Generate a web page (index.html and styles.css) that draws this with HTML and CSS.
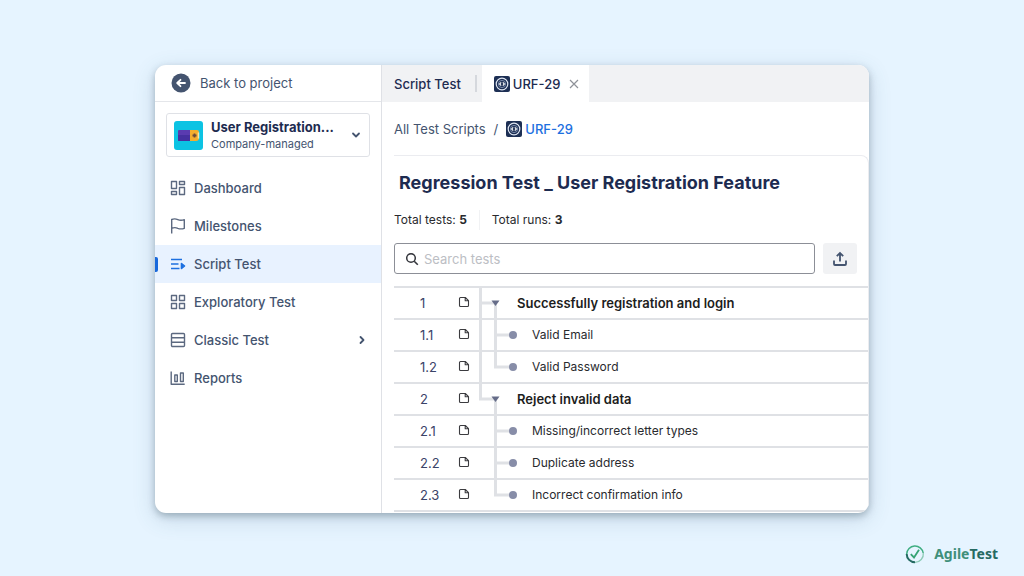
FILE: index.html
```html
<!DOCTYPE html>
<html lang="en">

<head>
    <meta charset="UTF-8">
    <meta name="viewport" content="width=device-width, initial-scale=1">
    <title>AgileTest</title>
    <link rel="stylesheet" href="styles.css">
</head>

<body>
    <!-- shared icons -->
    <svg class="sprite" width="0" height="0">
        <symbol id="script" viewBox="0 0 16 16">
            <rect width="16" height="16" rx="2" fill="#1d2f54"/>
            <circle cx="8" cy="8" r="5.8" fill="none" stroke="#dfe6f2" stroke-width="1.2"/>
            <circle cx="8" cy="8" r="3.6" fill="none" stroke="#8fa0bf" stroke-width="0.8"/>
            <path d="M7.2 6.4 5.6 8l1.600 1.600M8.800 6.400 10.400 8 8.800 9.600" fill="none" stroke="#fff" stroke-width="1.1"/>
        </symbol>
        <symbol id="note" viewBox="0 0 12 12">
            <path d="M2.5 1.5h4.8l3.2 3.2v4.8a1 1 0 0 1-1 1h-7a1 1 0 0 1-1-1v-7a1 1 0 0 1 1-1zM7.2 1.5v3.3h3.3" fill="none" stroke="#3b3b3f" stroke-width="1.1" stroke-linejoin="round"/>
        </symbol>
        <!-- tree pieces, one per row -->
        <symbol id="tree-first" viewBox="0 0 40 32">
            <path d="M3.5 0v32M3.5 17H18M18.5 17v15" class="branch"/>
            <path d="M14.5 14.5h8l-4 5.5z" fill="#656c88"/>
        </symbol>
        <symbol id="tree-last" viewBox="0 0 40 32">
            <path d="M3.5 0v17H18M18.5 17v15" class="branch"/>
            <path d="M14.5 14.5h8l-4 5.5z" fill="#656c88"/>
        </symbol>
        <symbol id="leaf-outer" viewBox="0 0 40 32">
            <path d="M3.5 0v32M18.5 0v32M18.5 17H36" class="branch"/>
            <circle cx="36" cy="17" r="4" fill="#878da8"/>
        </symbol>
        <symbol id="leaf-outer-end" viewBox="0 0 40 32">
            <path d="M3.5 0v32M18.5 0v17H36" class="branch"/>
            <circle cx="36" cy="17" r="4" fill="#878da8"/>
        </symbol>
        <symbol id="leaf" viewBox="0 0 40 32">
            <path d="M18.5 0v32M18.5 17H36" class="branch"/>
            <circle cx="36" cy="17" r="4" fill="#878da8"/>
        </symbol>
        <symbol id="leaf-end" viewBox="0 0 40 32">
            <path d="M18.5 0v17H36" class="branch"/>
            <circle cx="36" cy="17" r="4" fill="#878da8"/>
        </symbol>
    </svg>

    <div class="window">
        <aside class="sidebar">
            <a class="back" href="#">
                <svg width="20" height="20" viewBox="0 0 20 20">
                    <circle cx="10" cy="10" r="9.5" fill="#44546f"/>
                    <path d="M14 10H6.5M9.5 6.8 6.2 10l3.3 3.2" fill="none" stroke="#fff" stroke-width="1.8" stroke-linecap="round" stroke-linejoin="round"/>
                </svg>
                Back to project
            </a>

            <button class="project" type="button">
                <svg width="29" height="29" viewBox="0 0 29 29">
                    <rect width="29" height="29" rx="3" fill="#0cc3e3"/>
                    <path d="M5 9h12v11H5a1 1 0 0 1-1-1v-9a1 1 0 0 1 1-1z" fill="#5a3bb0"/>
                    <path d="M4 14h13v6H5a1 1 0 0 1-1-1z" fill="#4630a0"/>
                    <path d="M16 9h7a2 2 0 0 1 2 2v6a3 3 0 0 1-3 3h-6z" fill="#f5ae2d"/>
                    <path d="M24.500 11.5v6" stroke="#fbe3a5" stroke-width="1.5"/>
                    <path d="M20.500 12.500v4M18.500 14.500h4" stroke="#6b4a3c" stroke-width="1.8"/>
                </svg>
                <span class="project-text">
                    <b>User Registration...</b>
                    <small>Company-managed</small>
                </span>
                <svg width="10" height="10" viewBox="0 0 10 10">
                    <path d="M2 3.500 5 6.500 8 3.500" fill="none" stroke="#44546f" stroke-width="1.8" stroke-linecap="round" stroke-linejoin="round"/>
                </svg>
            </button>

            <nav class="menu">
                <a href="#">
                    <svg viewBox="0 0 16 16"><path d="M1.500 1.500h5v7h-5zM9.500 1.500h5v3h-5zM1.500 11.500h5v3h-5zM9.500 7.500h5v7h-5z"/></svg>
                    Dashboard
                </a>
                <a href="#">
                    <svg viewBox="0 0 16 16"><path d="M1.700 15.500V1.500C4.500.3 6 .8 7.800 1.600c2 .9 4 .9 6.500.1v8.600c-2.500.9-4.500.8-6.500 0-2-.9-3.700-1-6.100 0"/></svg>
                    Milestones
                </a>
                <a class="active" href="#">
                    <svg viewBox="0 0 16 16"><path d="M1 3.500h11M1 8h7.500M1 12.500h8.500"/><path d="M11.500 7.500v5l3-2.500z" fill="#1d70e0"/></svg>
                    Script Test
                </a>
                <a href="#">
                    <svg viewBox="0 0 16 16"><path d="M1.500 1.500h5v5h-5zM9.500 1.500h5v5h-5zM1.500 9.500h5v5h-5zM9.500 9.500h5v5h-5z"/></svg>
                    Exploratory Test
                </a>
                <a href="#">
                    <svg viewBox="0 0 16 16"><path d="M2.500 1.500h11a1 1 0 0 1 1 1v11a1 1 0 0 1-1 1h-11a1 1 0 0 1-1-1v-11a1 1 0 0 1 1-1zM1.500 5.800h13M1.500 10.200h13"/></svg>
                    Classic Test
                    <svg class="more" viewBox="0 0 10 10"><path d="M3.500 2 6.500 5 3.500 8"/></svg>
                </a>
                <a href="#">
                    <svg viewBox="0 0 16 16"><path d="M1.200 1.500v12.800h13.500M4.800 5h2.500v6.500H4.800zM10.500 3h2.800v8.500h-2.800z"/></svg>
                    Reports
                </a>
            </nav>
        </aside>

        <main>
            <div class="tabs">
                <a class="tab" href="#">Script Test</a>
                <span class="divider"></span>
                <div class="tab current">
                    <a href="#"><svg width="16" height="16"><use href="#script"/></svg>URF-29</a>
                    <button class="close" type="button" aria-label="Close tab">
                        <svg width="10" height="10" viewBox="0 0 10 10"><path d="M1 1l8 8M9 1 1 9" stroke="#8f9299" stroke-width="1.2"/></svg>
                    </button>
                </div>
            </div>

            <div class="breadcrumb">
                <a href="#">All Test Scripts</a>
                <span>/</span>
                <a class="here" href="#"><svg width="16" height="16"><use href="#script"/></svg>URF-29</a>
            </div>

            <section class="panel">
                <h1>Regression Test _ User Registration Feature</h1>
                <div class="totals">
                    <span>Total tests: <b>5</b></span>
                    <span>Total runs: <b>3</b></span>
                </div>

                <div class="tools">
                    <label class="search">
                        <svg width="14" height="14" viewBox="0 0 14 14">
                            <circle cx="6" cy="6" r="4.300" fill="none" stroke="#33353b" stroke-width="1.500"/>
                            <path d="M9.200 9.200 12.800 12.800" stroke="#33353b" stroke-width="1.600"/>
                        </svg>
                        <input type="text" placeholder="Search tests" aria-label="Search tests">
                    </label>
                    <button class="export" type="button" aria-label="Export">
                        <svg width="16" height="16" viewBox="0 0 16 16">
                            <path d="M8 10.500V2.500M4.800 5.200 8 2l3.200 3.200M2 9.500V13a1 1 0 0 0 1 1h10a1 1 0 0 0 1-1V9.500" fill="none" stroke="#44546f" stroke-width="1.800"/>
                        </svg>
                    </button>
                </div>

                <table>
                    <tr class="group">
                        <td class="num">1</td>
                        <td class="doc"><svg width="12" height="12"><use href="#note"/></svg></td>
                        <td class="tree"><svg width="40" height="32"><use href="#tree-first"/></svg></td>
                        <td>Successfully registration and login</td>
                    </tr>
                    <tr>
                        <td class="num">1.1</td>
                        <td class="doc"><svg width="12" height="12"><use href="#note"/></svg></td>
                        <td class="tree"><svg width="40" height="32"><use href="#leaf-outer"/></svg></td>
                        <td class="name">Valid Email</td>
                    </tr>
                    <tr>
                        <td class="num">1.2</td>
                        <td class="doc"><svg width="12" height="12"><use href="#note"/></svg></td>
                        <td class="tree"><svg width="40" height="32"><use href="#leaf-outer-end"/></svg></td>
                        <td class="name">Valid Password</td>
                    </tr>
                    <tr class="group">
                        <td class="num">2</td>
                        <td class="doc"><svg width="12" height="12"><use href="#note"/></svg></td>
                        <td class="tree"><svg width="40" height="32"><use href="#tree-last"/></svg></td>
                        <td>Reject invalid data</td>
                    </tr>
                    <tr>
                        <td class="num">2.1</td>
                        <td class="doc"><svg width="12" height="12"><use href="#note"/></svg></td>
                        <td class="tree"><svg width="40" height="32"><use href="#leaf"/></svg></td>
                        <td class="name">Missing/incorrect letter types</td>
                    </tr>
                    <tr>
                        <td class="num">2.2</td>
                        <td class="doc"><svg width="12" height="12"><use href="#note"/></svg></td>
                        <td class="tree"><svg width="40" height="32"><use href="#leaf"/></svg></td>
                        <td class="name">Duplicate address</td>
                    </tr>
                    <tr>
                        <td class="num">2.3</td>
                        <td class="doc"><svg width="12" height="12"><use href="#note"/></svg></td>
                        <td class="tree"><svg width="40" height="32"><use href="#leaf-end"/></svg></td>
                        <td class="name">Incorrect confirmation info</td>
                    </tr>
                </table>
            </section>
        </main>
    </div>

    <footer>
        <svg width="20" height="20" viewBox="0 0 20 20" fill="none">
            <path d="M18.200 9A8.300 8.300 0 0 0 1.700 10" stroke="#3fae82" stroke-width="1.500"/>
            <path d="M1.700 10a8.300 8.300 0 0 0 8.300 8.300" stroke="#256a62" stroke-width="2"/>
            <path d="M10 18.300A8.300 8.300 0 0 0 18.300 9" stroke="#8ccbb6" stroke-width="1.300"/>
            <path d="M5.800 10.200 9 13.500 14 5.800" stroke="#35a374" stroke-width="1.800"/>
        </svg>
        <span>Agile<em>Test</em></span>
    </footer>
</body>

</html>
```
FILE: styles.css
```css
* {
    box-sizing: border-box;
}

body {
    display: flex;
    flex-direction: column;
    min-height: 100vh;
    margin: 0;
    padding-top: 65px;
    background: #e6f4ff;
    font-family: Inter, "Liberation Sans", sans-serif;
    font-size: 13px;
    line-height: 20px;
    color: #44546f;
}

a {
    color: inherit;
    text-decoration: none;
}

button {
    padding: 0;
    border: none;
    background: none;
    font: inherit;
    color: inherit;
    cursor: pointer;
}

svg {
    display: block;
    flex: none;
}

.sprite {
    position: absolute;
}

.window {
    display: flex;
    margin: 0 155px;
    border-radius: 11px;
    background: #fff;
    overflow: hidden;
    box-shadow: 0 3px 7px rgba(60, 80, 95, 0.35), 0 6px 22px rgba(60, 100, 125, 0.2);
}

/* sidebar */
.sidebar {
    flex: none;
    width: 227px;
    border-right: 1px solid #dfe1e6;
}

.back {
    display: flex;
    align-items: center;
    gap: 9px;
    height: 37px;
    padding-left: 16px;
    border-bottom: 1px solid #e4e6ea;
}

.project {
    display: flex;
    align-items: center;
    width: 204px;
    height: 44px;
    margin: 11px 11px 12px;
    padding: 0 8px 0 7px;
    border: 1px solid #dfe1e6;
    border-radius: 3px;
    text-align: left;
}

.project-text {
    flex: 1;
    padding-left: 8px;
}

.project b {
    display: block;
    line-height: 18px;
    font-weight: 700;
    color: #1d2b50;
}

.project small {
    display: block;
    font-size: 11px;
    line-height: 16px;
}

.menu a {
    display: flex;
    align-items: center;
    gap: 8px;
    height: 38px;
    padding: 0 14px 0 15px;
    font-weight: 500;
}

.menu svg {
    width: 16px;
    height: 16px;
    fill: none;
    stroke: #5c6980;
    stroke-width: 1.4;
    stroke-linejoin: round;
}

.menu .more {
    width: 10px;
    height: 10px;
    margin-left: auto;
    stroke: #44546f;
    stroke-width: 1.8;
    stroke-linecap: round;
}

.menu .active {
    position: relative;
    background: #e8f2ff;
}

.menu .active svg {
    stroke: #1d70e0;
    stroke-width: 1.6;
}

.active::before {
    content: "";
    position: absolute;
    left: 0;
    width: 3px;
    height: 15px;
    border-radius: 0 2px 2px 0;
    background: #1868db;
}

/* content */
main {
    flex: 1;
    min-width: 0;
}

.tabs {
    display: flex;
    align-items: center;
    height: 37px;
    padding-left: 12px;
    background: #f1f2f4;
    font-weight: 500;
    color: #1d2b50;
}

.tabs .divider {
    width: 2px;
    height: 17px;
    margin: 0 5px 0 14px;
    background: #d5d8dd;
}

.current {
    display: flex;
    align-items: center;
    gap: 9px;
    height: 100%;
    padding: 0 10px 0 12px;
    background: #fff;
}

.current a,
.here {
    display: flex;
    align-items: center;
    gap: 3px;
}

.breadcrumb {
    display: flex;
    align-items: center;
    gap: 8px;
    height: 53px;
    padding-left: 12px;
}

.breadcrumb .here {
    font-weight: 500;
    color: #1d70e0;
}

.panel {
    margin-left: 12px;
    padding-bottom: 1px;
    border-top: 1px solid #ebecf0;
    border-right: 1px solid #ebecf0;
    border-top-right-radius: 8px;
}

h1 {
    margin: 0;
    padding: 15px 0 0 5px;
    font-size: 18px;
    line-height: 24px;
    font-weight: 700;
    color: #1d2b50;
}

.totals {
    display: flex;
    padding: 15px 0 13px;
    font-size: 12px;
    color: #292a2e;
}

.totals b {
    font-weight: 700;
}

.totals span + span {
    margin-left: 12px;
    padding-left: 12px;
    border-left: 1px solid #f1f2f4;
}

.tools {
    display: flex;
    gap: 8px;
    padding-right: 11px;
}

.search {
    display: flex;
    align-items: center;
    flex: 1;
    gap: 5px;
    height: 31px;
    padding: 0 10px;
    border: 1px solid #8c8f97;
    border-radius: 3px;
}

.search input {
    flex: 1;
    min-width: 0;
    padding: 0;
    border: none;
    outline: none;
    background: none;
    font: inherit;
    color: #292a2e;
}

.search input::placeholder {
    color: #bcbec4;
}

.export {
    display: flex;
    align-items: center;
    justify-content: center;
    width: 34px;
    height: 31px;
    border-radius: 3px;
    background: #f1f2f4;
}

table {
    width: 100%;
    margin-top: 12px;
    border-spacing: 0;
    border-bottom: 2px solid #dfe1e5;
    font-size: 12px;
    color: #292a2e;
}

td {
    height: 32px;
    padding: 0;
    border-top: 2px solid #dfe1e5;
}

.num {
    width: 64px;
    padding-left: 26px;
    font-size: 13px;
    color: #3b4468;
}

.doc {
    width: 20px;
    padding-bottom: 3px;
}

/* the branches run over the row lines */
.tree {
    width: 39px;
}

.tree svg {
    height: 32px;
    margin: -2px 0 0 -1px;
}

.branch {
    fill: none;
    stroke: #dfe1e5;
    stroke-width: 3px;
}

.group td:last-child {
    font-size: 13px;
    font-weight: 600;
    color: #1c1d20;
}

.name {
    padding-left: 15px;
}

footer {
    display: flex;
    align-items: center;
    justify-content: flex-end;
    gap: 9px;
    margin-top: auto;
    padding: 12px 26px 12px 0;
    font-family: "Noto Sans", sans-serif;
    font-size: 14px;
    font-weight: 700;
    color: #3f8f7a;
}

footer em {
    font-style: normal;
    color: #256a62;
}
```
